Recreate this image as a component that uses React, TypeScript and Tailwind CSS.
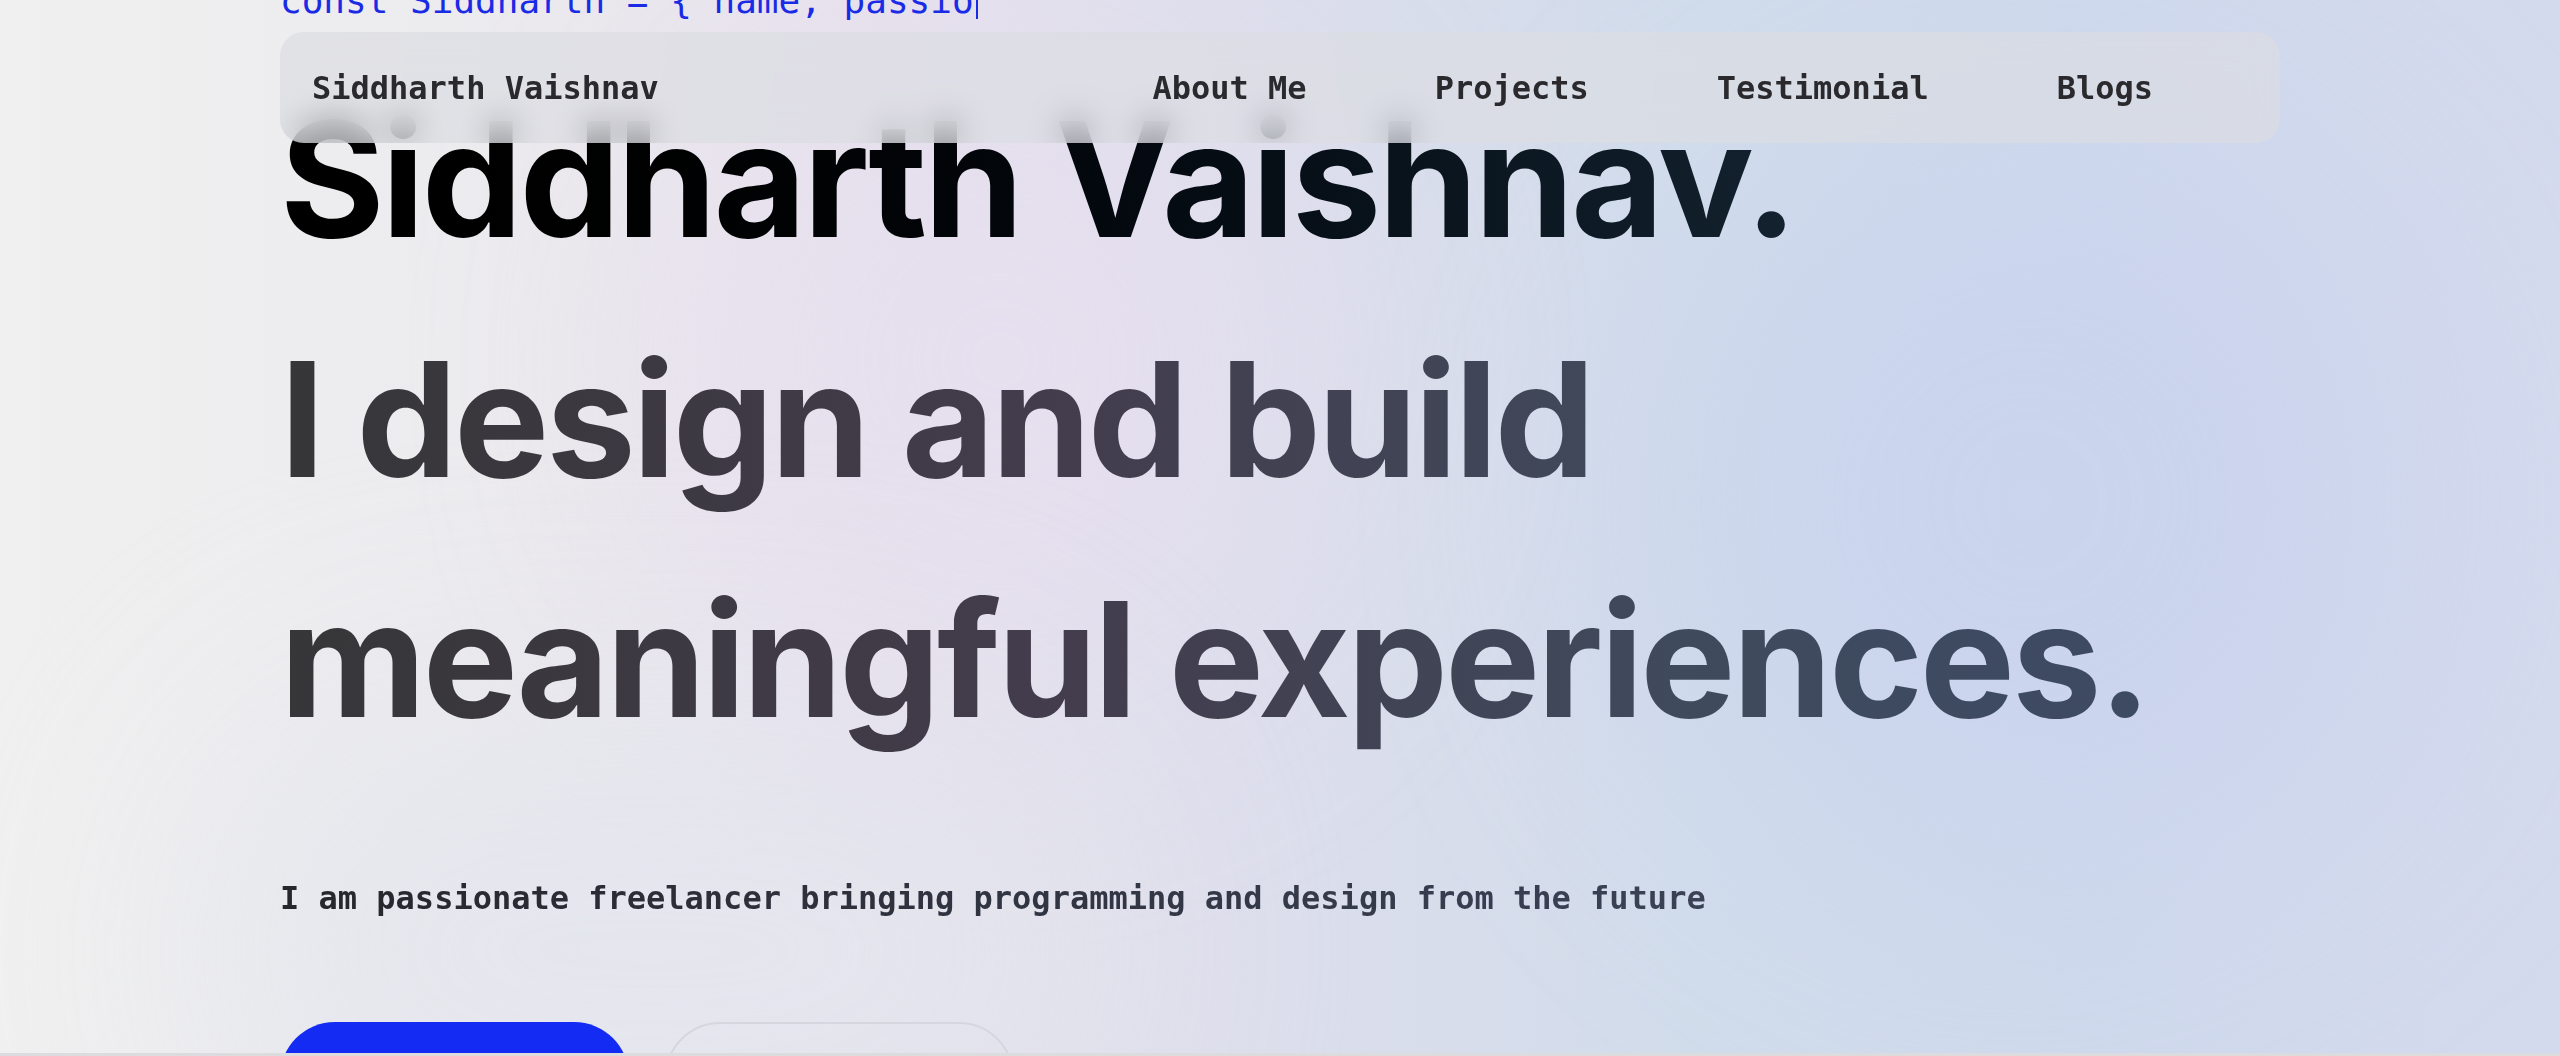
export default function App() {
  const links = ["About Me", "Projects", "Testimonial", "Blogs"];

  return (
    <div className="relative h-[1056px] overflow-hidden bg-[linear-gradient(90deg,#f0f0f0_0%,#ecebee_18%,#e6e1ec_34%,#dcdeec_50%,#d1dceb_66%,#cfd9ec_82%,#d4daee_100%)]">
      {/* soft background blobs */}
      <div className="pointer-events-none absolute left-[1650px] top-[120px] h-[760px] w-[760px] rounded-full bg-[#c8d1ee] opacity-60 blur-[140px]" />
      <div className="pointer-events-none absolute left-[700px] top-[60px] h-[600px] w-[600px] rounded-full bg-[#e8dff0] opacity-70 blur-[140px]" />
      <div className="pointer-events-none absolute left-[200px] top-[700px] h-[500px] w-[900px] rounded-full bg-[#e4e6ee] opacity-80 blur-[120px]" />

      {/* Navbar */}
      <nav className="absolute left-0 right-0 top-8 z-20 mx-auto flex h-[111px] w-[2000px] items-center justify-between rounded-[24px] bg-[#dcdde2]/70 pl-8 pr-[127px] backdrop-blur-[16px]">
        <span className="font-['DejaVu_Sans_Mono',monospace] text-[32px] font-bold text-[#2a2a2e]">
          Siddharth Vaishnav
        </span>
        <div className="flex items-center gap-[128px]">
          {links.map((l) => (
            <a
              key={l}
              className="font-['DejaVu_Sans_Mono',monospace] text-[32px] font-bold text-[#2a2a2e]"
            >
              {l}
            </a>
          ))}
        </div>
      </nav>

      {/* Hero */}
      <main className="relative z-10 mx-auto mt-[-29px] w-[2000px]">
        <div className="font-['DejaVu_Sans_Mono',monospace] text-[36px] leading-[54px] text-[#1a2be6]">
          const Siddharth = {"{"} name, passio
          <span className="ml-[2px] inline-block h-[42px] w-[2px] translate-y-[6px] bg-[#1a2be6]" />
        </div>

        <h1 className="mt-[31px] font-['Inter',sans-serif] text-[160px] font-bold leading-[240px] tracking-[-0.02em]">
          <span className="block w-fit bg-gradient-to-r from-black to-[#13222f] bg-clip-text text-transparent">
            Siddharth Vaishnav.
          </span>
          <span className="block w-fit bg-[linear-gradient(90deg,#363638_0%,#433c4c_40%,#3f4a5c_75%,#3d4a63_100%)] bg-clip-text text-transparent">
            I design and build
            <br />
            meaningful experiences.
          </span>
        </h1>

        <p className="mt-[95px] w-fit bg-gradient-to-r from-[#26262c] to-[#3b4256] bg-clip-text font-['DejaVu_Sans_Mono',monospace] text-[32px] font-semibold leading-[48px] text-transparent">
          I am passionate freelancer bringing programming and design from the future
        </p>

        <div className="mt-[100px] flex gap-9">
          <button className="h-[110px] w-[349px] rounded-full bg-[#132bf2] font-['DejaVu_Sans_Mono',monospace] text-[28px] font-bold text-white">
            Hire Me
          </button>
          <button className="h-[110px] w-[349px] rounded-full border-2 border-[#d6d7de] font-['DejaVu_Sans_Mono',monospace] text-[28px] font-bold text-[#2a2a2e]">
            My Work
          </button>
        </div>
      </main>

      <div className="absolute bottom-0 left-0 right-0 z-30 h-[3px] bg-[#dcdcdf]" />
    </div>
  );
}
